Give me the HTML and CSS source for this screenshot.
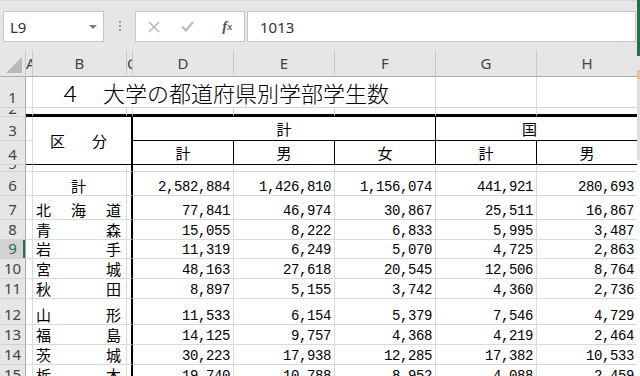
FILE: index.html
```html
<!DOCTYPE html>
<html>
  <head>
    <meta charset="utf-8">
    <title>大学の都道府県別学部学生数</title>
    <link rel="stylesheet" href="styles.css">
  </head>
  <body>
    <div class="formula-bar">
      <div class="name-box">
        <span>L9</span>
        <svg width="8" height="4" viewBox="0 0 8 4"><path d="M0 0h8L4 4z" fill="#7a7a7a"/></svg>
      </div>
      <div class="grip"><i></i><i></i><i></i></div>
      <div class="fx-buttons">
        <span class="slot">
          <svg width="12" height="12" viewBox="0 0 12 12"><path d="M1 1l10 10M11 1L1 11" stroke="#b9b9b9" stroke-width="1.6" fill="none"/></svg>
        </span>
        <span class="slot">
          <svg width="13" height="11" viewBox="0 0 13 11"><path d="M1 5.5l4 4L12 1" stroke="#b9b9b9" stroke-width="2" fill="none"/></svg>
        </span>
        <span class="slot fx">f<sub>x</sub></span>
      </div>
      <div class="formula-input">1013</div>
    </div>

    <table class="sheet">
      <colgroup>
        <col class="c-head"><col class="c-a"><col class="c-b"><col class="c-c"><col class="c-num" span="5">
      </colgroup>
      <tr class="col-heads">
        <th class="corner"><svg width="16" height="16" viewBox="0 0 16 16"><path d="M16 0V16H0z" fill="#b9b9b9"/></svg></th>
        <th>A</th><th>B</th><th>C</th><th>D</th><th>E</th><th>F</th><th>G</th><th>H</th>
      </tr>
      <tr class="h31">
        <th class="row-head">1</th>
        <td></td>
        <td colspan="5" class="title">４　大学の都道府県別学部学生数</td>
        <td></td><td></td>
      </tr>
      <tr class="h9">
        <th class="row-head"><div class="stub">2</div></th>
        <td class="rule"></td><td class="rule"></td><td class="rule"></td><td class="rule"></td>
        <td class="rule"></td><td class="rule"></td><td class="rule"></td><td class="rule"></td>
      </tr>
      <tr class="h24">
        <th class="row-head">3</th>
        <td></td>
        <td colspan="2" rowspan="2" class="label spread kubun">区　分</td>
        <td colspan="3" class="label boxed">計</td>
        <td colspan="2" class="label under kuni">国</td>
      </tr>
      <tr class="h24">
        <th class="row-head">4</th>
        <td class="under"></td>
        <td class="label boxed">計</td>
        <td class="label boxed">男</td>
        <td class="label boxed">女</td>
        <td class="label boxed">計</td>
        <td class="label under">男</td>
      </tr>
      <tr class="h7">
        <th class="row-head"><div class="stub">5</div></th>
        <td></td><td></td><td class="divider"></td>
        <td></td><td></td><td></td><td></td><td></td>
      </tr>
      <tr class="h24">
        <th class="row-head">6</th>
        <td></td><td class="name total">計</td><td class="divider"></td>
        <td class="num">2,582,884</td><td class="num">1,426,810</td><td class="num">1,156,074</td><td class="num">441,921</td><td class="num">280,693</td>
      </tr>
      <tr class="h24">
        <th class="row-head">7</th>
        <td></td><td class="name spread">北海道</td><td class="divider"></td>
        <td class="num">77,841</td><td class="num">46,974</td><td class="num">30,867</td><td class="num">25,511</td><td class="num">16,867</td>
      </tr>
      <tr class="h20">
        <th class="row-head">8</th>
        <td></td><td class="name spread">青森</td><td class="divider"></td>
        <td class="num">15,055</td><td class="num">8,222</td><td class="num">6,833</td><td class="num">5,995</td><td class="num">3,487</td>
      </tr>
      <tr class="h19">
        <th class="row-head active">9</th>
        <td></td><td class="name spread">岩手</td><td class="divider"></td>
        <td class="num">11,319</td><td class="num">6,249</td><td class="num">5,070</td><td class="num">4,725</td><td class="num">2,863</td>
      </tr>
      <tr class="h20">
        <th class="row-head">10</th>
        <td></td><td class="name spread">宮城</td><td class="divider"></td>
        <td class="num">48,163</td><td class="num">27,618</td><td class="num">20,545</td><td class="num">12,506</td><td class="num">8,764</td>
      </tr>
      <tr class="h20">
        <th class="row-head">11</th>
        <td></td><td class="name spread">秋田</td><td class="divider"></td>
        <td class="num">8,897</td><td class="num">5,155</td><td class="num">3,742</td><td class="num">4,360</td><td class="num">2,736</td>
      </tr>
      <tr class="h26">
        <th class="row-head">12</th>
        <td></td><td class="name spread">山形</td><td class="divider"></td>
        <td class="num">11,533</td><td class="num">6,154</td><td class="num">5,379</td><td class="num">7,546</td><td class="num">4,729</td>
      </tr>
      <tr class="h20">
        <th class="row-head">13</th>
        <td></td><td class="name spread">福島</td><td class="divider"></td>
        <td class="num">14,125</td><td class="num">9,757</td><td class="num">4,368</td><td class="num">4,219</td><td class="num">2,464</td>
      </tr>
      <tr class="h20">
        <th class="row-head">14</th>
        <td></td><td class="name spread">茨城</td><td class="divider"></td>
        <td class="num">30,223</td><td class="num">17,938</td><td class="num">12,285</td><td class="num">17,382</td><td class="num">10,533</td>
      </tr>
      <tr class="h20">
        <th class="row-head">15</th>
        <td></td><td class="name spread">栃木</td><td class="divider"></td>
        <td class="num">19,740</td><td class="num">10,788</td><td class="num">8,952</td><td class="num">4,088</td><td class="num">2,459</td>
      </tr>
    </table>

    <div class="window-edge"></div>
  </body>
</html>
```

FILE: styles.css
```css
body { margin: 0; width: 640px; height: 376px; overflow: hidden; position: relative; background: #fff; font-family: "Noto Sans", "Liberation Sans", sans-serif; }

/* formula bar */
.formula-bar { display: flex; align-items: flex-start; height: 50px; box-sizing: border-box; padding: 10px 4px 0 3px; background: #e6e6e6; border-top: 1px solid #d8d8d8; }
.name-box { width: 101px; height: 31px; box-sizing: border-box; display: flex; align-items: center; justify-content: space-between; padding: 0 6px 0 6px; background: #fff; border: 1px solid #c6c6c6; font-size: 15px; color: #333; }
.grip { width: 31px; display: flex; flex-direction: column; align-items: center; gap: 2px; padding-top: 10px; }
.grip i { display: block; width: 2px; height: 2px; background: #a0a0a0; }
.fx-buttons { width: 110px; height: 31px; box-sizing: border-box; display: flex; align-items: center; padding-left: 1px; background: #fff; border: 1px solid #c6c6c6; }
.fx-buttons .slot { width: 35px; display: flex; justify-content: center; align-items: center; }
.fx { font-family: "Liberation Serif", serif; font-style: italic; font-weight: bold; font-size: 15px; color: #555; padding-left: 6px; }
.fx sub { font-size: 10px; vertical-align: -1px; }
.formula-input { flex: 1; height: 31px; box-sizing: border-box; margin-left: 2px; display: flex; align-items: center; padding-left: 12px; background: #fff; border: 1px solid #c6c6c6; font-size: 15px; color: #333; }

.window-edge { position: absolute; top: 0; right: 0; width: 3px; height: 376px; background: linear-gradient(#217346 0 56px, #e4e4e4 56px 70px, #e6c189 70px 79px, #dedede 79px 160px, #fff 160px); }

/* sheet */
.sheet { border-collapse: separate; border-spacing: 0; table-layout: fixed; width: 638px; font-family: "Noto Sans CJK JP", sans-serif; color: #000; }
.c-head { width: 26px; }
.c-a { width: 7px; }
.c-b { width: 94px; }
.c-c { width: 6px; }
.c-num { width: 101px; }

.sheet th, .sheet td { padding: 0; border-right: 1px solid #dadada; border-bottom: 1px solid #dadada; overflow: hidden; white-space: nowrap; vertical-align: bottom; font-weight: normal; }

.sheet .col-heads { height: 27px; }
.sheet .col-heads th { background: #e6e6e6; border-right-color: #c8c8c8; border-bottom-color: #ababab; font-family: "Noto Sans", sans-serif; font-size: 15px; line-height: 15px; color: #444; text-align: center; vertical-align: middle; }
.sheet .col-heads .corner { text-align: right; vertical-align: bottom; line-height: 0; padding: 0 3px 3px 0; }
.corner svg { display: inline-block; }

.sheet .row-head { background: #e6e6e6; border-right-color: #ababab; border-bottom-color: #d2d2d2; font-family: "Noto Sans", sans-serif; font-size: 15px; line-height: 15px; color: #444; text-align: center; padding-bottom: 2px; }
.sheet .row-head.active { background: #d2d2d2; color: #217346; box-shadow: inset -2px 0 #217346; }
.stub { height: 6px; display: flex; align-items: flex-end; justify-content: center; overflow: hidden; }
.sheet th:has(.stub) { padding-bottom: 0; }

.h31 { height: 31px; }
.h26 { height: 26px; }
.h24 { height: 24px; }
.h20 { height: 20px; }
.h19 { height: 19px; }
.h9 { height: 9px; }
.h7 { height: 7px; }

.sheet .title { font-size: 22px; line-height: 22px; padding: 0 0 4px 26px; font-weight: 300; }

.sheet .rule { border-bottom: 3px solid #000; }
.sheet .label { font-size: 15px; line-height: 15px; text-align: center; vertical-align: middle; }
.sheet .boxed { border-right-color: #000; border-bottom-color: #000; }
.sheet .under { border-bottom-color: #000; }
.sheet .kuni { padding-right: 14px; }
.sheet .kubun { border-right: 2px solid #000; border-bottom-color: #000; padding: 0 24px 0 17px; }
.sheet .divider { border-right: 2px solid #000; }

.sheet .spread { text-align: justify; text-align-last: justify; }
.sheet .name { font-size: 15px; line-height: 15px; padding: 0 5px 2px 3px; }
.sheet .name.total { text-align: center; }
.sheet .num { font-family: "Liberation Mono", monospace; font-size: 14px; line-height: 14px; letter-spacing: -0.4px; text-align: right; padding: 0 3px 1px 0; }
```
